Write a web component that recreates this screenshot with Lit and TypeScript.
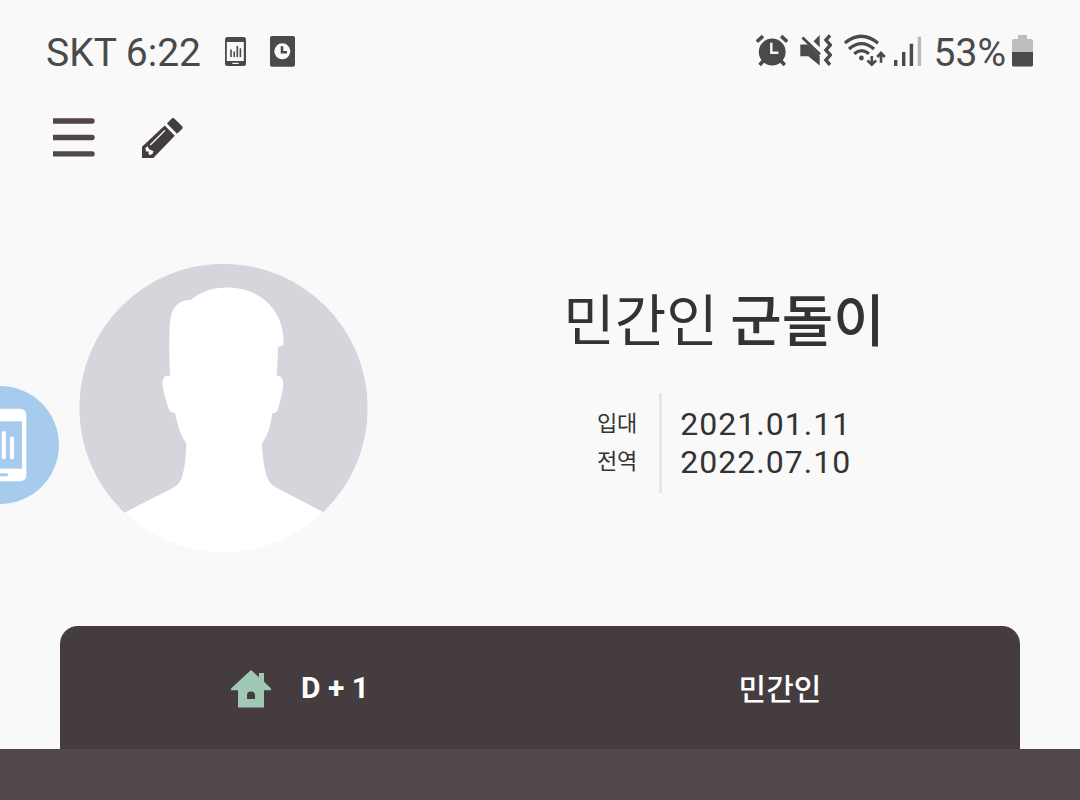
import { LitElement, html, css, svg } from "lit";
import { customElement, property } from "lit/decorators.js";

const phoneIcon = svg`<svg class="glyph" width="21" height="40" viewBox="0 0 21 40" aria-hidden="true">
  <rect x="0" y="5" width="21" height="29" rx="2.5" fill="#4a4a4a"/>
  <rect x="1.8" y="10" width="17" height="19" fill="#f9f9f9"/>
  <path d="M6 17.5V25M9.2 19.5V25M12.3 14V25M15.4 16.3V25" stroke="#4a4a4a" stroke-width="1.6"/>
  <path d="M7.3 31.4H13.7" stroke="#f9f9f9" stroke-width="1.2"/>
</svg>`;

const safeIcon = svg`<svg class="glyph" width="25" height="40" viewBox="0 0 25 40" aria-hidden="true">
  <rect x="0" y="4" width="25" height="30.8" rx="2" fill="#4a4a4a"/>
  <circle cx="12.3" cy="19.3" r="8" fill="#f9f9f9"/>
  <path d="M12 14.2V20.2H17" fill="none" stroke="#4a4a4a" stroke-width="2.6"/>
</svg>`;

const alarmIcon = svg`<svg class="glyph" width="32" height="40" viewBox="0 0 32 40" aria-hidden="true">
  <circle cx="16.2" cy="20" r="13.4" fill="#4a4a4a"/>
  <path d="M.8 9.6L7 4.2M25.2 4.2L31.2 9.6M3.6 33L9 27M28.8 33L23 27" stroke="#4a4a4a" stroke-width="3.6"/>
  <path d="M15.3 10.8V20.8H22.4" fill="none" stroke="#f9f9f9" stroke-width="2.4"/>
</svg>`;

const muteIcon = svg`<svg class="glyph" width="32" height="40" viewBox="0 0 32 40" aria-hidden="true">
  <path d="M.3 12.6H8L19.7 24V33.6L8.3 24.2H.3Z" fill="#4a4a4a"/>
  <path d="M2.4 5.4L20 22.6" stroke="#4a4a4a" stroke-width="2.8"/>
  <path d="M13.6 9.2L19.7 3V15.2Z" fill="#4a4a4a"/>
  <path d="M30 3.4L25.9 8L30.3 13L25.9 18L30.3 23L25.9 28L30 32.8" fill="none" stroke="#4a4a4a" stroke-width="3.4"/>
</svg>`;

const wifiIcon = svg`<svg class="glyph wifi" width="38" height="40" viewBox="0 0 38 40" aria-hidden="true">
  <g fill="none" stroke="#4a4a4a" stroke-width="3.2">
    <path d="M.9 11Q17.5-2.6 34 11.2M5 17Q17.5 6.2 30 17M10.2 21.8Q17.5 15.6 25 21.8"/>
    <path stroke-width="2.6" d="M27.800 24V32.200M23.400 28.400L27.800 32.600L32.200 28.400M37 30.800V21.400M33.200 25L37 21L40.800 25"/>
  </g>
  <circle cx="17.4" cy="26" r="2.4" fill="#4a4a4a"/>
</svg>`;

const signalIcon = svg`<svg class="glyph" width="28" height="40" viewBox="0 0 28 40" aria-hidden="true">
  <g stroke="#4a4a4a" stroke-width="3.4">
    <path d="M1.700 28V34M9.700 20V34M17.400 11.800V34"/>
    <path d="M25.400 4.600V34" stroke="#b8b8b8"/>
  </g>
</svg>`;

const batteryIcon = svg`<svg class="glyph" width="21" height="40" viewBox="0 0 21 40" aria-hidden="true">
  <path d="M6 3H15V7H19.5Q21 7 21 8.5V20H0V8.5Q0 7 1.5 7H6Z" fill="#bdbdbd"/>
  <path d="M0 20H21V33Q21 34.5 19.5 34.5H1.5Q0 34.5 0 33Z" fill="#4a4a4a"/>
</svg>`;

const menuIcon = svg`<svg class="glyph" width="42" height="42" viewBox="0 0 42 42" aria-hidden="true">
  <path fill="#514748" d="M0 1.3H39A2.7 2.7 0 0 1 39 6.7H0ZM0 17.8H39A2.7 2.7 0 0 1 39 23.2H0ZM0 34.2H39A2.7 2.7 0 0 1 39 39.6H0Z"/>
</svg>`;

const pencilIcon = svg`<svg class="glyph" width="42" height="42" viewBox="0 0 42 42" aria-hidden="true">
  <path fill="#443c3e" d="M25 6.4L29.2 2Q31 .2 32.8 1.9L39.4 8.4Q41.6 10.6 39.8 12.3L35 16.8Z"/>
  <path fill="#443c3e" d="M22.7 8.4L32.8 18.7L11.3 41H0V29.8Z"/>
  <path stroke="#f9f9f9" stroke-width="1.3" d="M23 13.2L8.3 28"/>
  <path fill="#f9f9f9" d="M3.4 31L5.6 29.2L7.2 32.2L11.4 34L10.8 36.4L8 38.2L6.5 37L6.8 34.6L4 34.4Z"/>
</svg>`;

const houseIcon = svg`<svg class="glyph" width="40" height="40" viewBox="0 -2 40 40" aria-hidden="true">
  <path fill="#9fc8b5" fill-rule="evenodd" d="M20 0L28 7.2V3H33V11.7L40 18.6V20.3H33V37.4H7V20.3H0V18.6ZM16 29H24V25.6A4 4 0 0 0 16 25.6Z"/>
</svg>`;

const avatarArt = svg`<svg class="glyph" width="289" height="288" viewBox="237 42 867 865" role="img" aria-label="프로필 사진">
  <defs><clipPath id="disc"><circle cx="670.5" cy="474.5" r="433"/></clipPath></defs>
  <g clip-path="url(#disc)">
    <rect x="237" y="41" width="867" height="760" fill="#d4d6dc"/>
    <path fill="#fff" d="M572 150C600 126 635 113 675 113C725 112 765 126 796 152C832 184 852 225 851 284C846 289 840 291 834 291C834 322 832 350 830 378C843 376 850 386 850 402C849 428 842 450 834 478C830 488 825 490 817 490C813 522 806 552 786 581C787 615 791 645 799 675C804 692 812 704 828 713L968 786L1104 860V908H237V860L374 788L516 716C534 706 543 696 548 676C555 645 558 615 559 581C541 555 532 525 525 489C515 490 509 486 506 477C496 450 489 425 487 402C487 386 492 375 510 378C508 340 507 300 508 262C509 225 509 195 522 175C534 156 552 150 572 150Z"/>
  </g>
</svg>`;

const bubbleArt = svg`<svg class="glyph" width="118" height="118" viewBox="-177 0 354 354" aria-hidden="true">
  <circle cx="0" cy="177" r="177" fill="#a6cbed"/>
  <rect x="-79" y="68" width="158" height="218" rx="18" fill="#fff"/>
  <rect x="-66" y="106" width="132" height="142" fill="#a6cbed"/>
  <path d="M-36 158V214M-13 158V214M11.500 141V214M36 158V214" stroke="#fff" stroke-width="12.500" stroke-linecap="round"/>
  <path d="M-20 266H20" stroke="#a6cbed" stroke-width="9" stroke-linecap="round"/>
</svg>`;

@customElement("status-bar")
class StatusBar extends LitElement {
  @property() carrier = "";
  @property() time = "";
  @property({ type: Number }) battery = 0;

  static styles = css`
    :host {
      display: flex;
      justify-content: space-between;
      padding: 32px 47px 0 46px;
      font-size: 39px;
      line-height: 42px;
      color: #4a4a4a;
    }
    .group { display: flex; align-items: flex-start; }
    .left { gap: 24px; }
    .right { gap: 12px; }
    .power { display: flex; align-items: flex-start; gap: 6px; }
    .glyph { display: block; flex: none; }
    .wifi { overflow: visible; }
  `;

  render() {
    return html`
      <div class="group left">
        <span>${this.carrier} ${this.time}</span>
        ${phoneIcon}${safeIcon}
      </div>
      <div class="group right">
        ${alarmIcon}${muteIcon}${wifiIcon}${signalIcon}
        <div class="power"><span>${this.battery}%</span>${batteryIcon}</div>
      </div>
    `;
  }
}

@customElement("app-root")
class AppRoot extends LitElement {
  static styles = css`
    :host {
      display: flex;
      flex-direction: column;
      position: relative;
      overflow: hidden;
      min-height: 100vh;
      box-sizing: border-box;
      background: #f9f9f9;
      color: #333;
      font-family: Roboto, "Noto Sans CJK KR", sans-serif;
    }
    button {
      padding: 0;
      border: 0;
      background: none;
      cursor: pointer;
    }
    .glyph { display: block; flex: none; }
    .toolbar {
      display: flex;
      gap: 47px;
      padding: 43px 53px 0;
    }
    .profile {
      display: flex;
      align-items: flex-start;
      padding: 105px 0 74px 79px;
    }
    .summary {
      flex: 1;
      display: flex;
      flex-direction: column;
      align-items: center;
      gap: 44px;
      padding-top: 21px;
    }
    .name {
      margin: 0;
      font-family: "Noto Sans CJK KR", sans-serif;
      font-size: 56px;
      line-height: 64px;
      font-weight: 400;
    }
    .name strong { font-weight: 500; }
    .period {
      display: flex;
      line-height: 38px;
    }
    .labels {
      font-size: 22px;
      padding: 12px 22px 12px 0;
    }
    .dates {
      font-size: 32px;
      letter-spacing: 1px;
      padding: 12px 0 12px 18px;
      border-left: 3px solid #e6e6e6;
    }
    .card {
      display: grid;
      grid-template-columns: 1fr 1fr;
      margin: 0 60px;
      padding: 40px 0;
      border-radius: 18px 18px 0 0;
      background: #443c3e;
      color: #fff;
    }
    .cell {
      display: flex;
      align-items: center;
      justify-content: center;
      gap: 30px;
      font-size: 30px;
      line-height: 43px;
    }
    .count { font-weight: 700; }
    .rank {
      font-family: "Noto Sans CJK KR", sans-serif;
      font-weight: 500;
    }
    .panel {
      flex: 1;
      min-height: 51px;
      background: #52484b;
    }
    .bubble {
      position: absolute;
      left: -59px;
      top: 386px;
      border-radius: 50%;
    }
  `;

  render() {
    return html`
      <status-bar carrier="SKT" time="6:22" battery="53"></status-bar>
      <nav class="toolbar">
        <button type="button" aria-label="메뉴">${menuIcon}</button>
        <button type="button" aria-label="편집">${pencilIcon}</button>
      </nav>
      <section class="profile">
        ${avatarArt}
        <div class="summary">
          <h1 class="name">민간인 <strong>군돌이</strong></h1>
          <div class="period">
            <div class="labels"><div>입대</div><div>전역</div></div>
            <div class="dates"><div>2021.01.11</div><div>2022.07.10</div></div>
          </div>
        </div>
      </section>
      <section class="card">
        <div class="cell">${houseIcon}<span class="count">D + 1</span></div>
        <div class="cell"><span class="rank">민간인</span></div>
      </section>
      <div class="panel"></div>
      <button type="button" class="bubble" aria-label="바로가기">${bubbleArt}</button>
    `;
  }
}
